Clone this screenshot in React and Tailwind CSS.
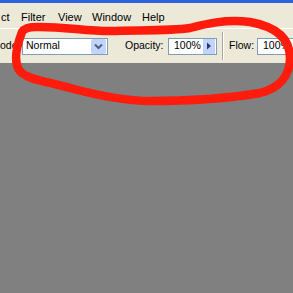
import React from 'react';

const font = { fontFamily: '"Liberation Sans", Arial, sans-serif' };

const MenuBar = () => {
    // cropped XP menu strip
    const items = [
        { label: 'ct', w: 'w-[20px]' },
        { label: 'Filter', w: 'w-[37px]' },
        { label: 'View', w: 'w-[34px]' },
        { label: 'Window', w: 'w-[50px]' },
        { label: 'Help', w: 'w-[40px]' },
    ];
    return (
        <div className="flex h-[25px] items-center pt-[3px] pl-[1px] bg-[#ece9d8] text-[11px] text-black">
            {items.map((item) => (
                <span key={item.label} className={`${item.w} shrink-0`}>
                    {item.label}
                </span>
            ))}
        </div>
    );
};

const Chevron = () => (
    <svg width="15" height="15" viewBox="0 0 15 15">
        <path d="M4 5.5 L7.5 9 L11 5.5" fill="none" stroke="#4d6185" strokeWidth="2" />
    </svg>
);

const RightArrow = () => (
    <svg width="12" height="14" viewBox="0 0 12 14">
        <polygon points="4,3.5 8,7 4,10.5" fill="#2b3a70" />
    </svg>
);

const ToolBar = () => (
    <div className="flex h-[34px] items-center bg-[#ece9d8] text-[10.5px] text-black">
        <span className="w-[22px] shrink-0">ode:</span>

        {/* blend mode combo */}
        <div className="flex h-[17px] w-[86px] shrink-0 items-center justify-between border border-[#7f9db9] bg-white">
            <span className="pl-[3px]">Normal</span>
            <div className="mr-[1px] flex h-[15px] w-[15px] items-center justify-center rounded-[2px] bg-[#c3d4fb]">
                <Chevron />
            </div>
        </div>

        <span className="ml-[17px] w-[43px] shrink-0">Opacity:</span>
        <div className="flex h-[17px] w-[49px] shrink-0 items-center justify-between border border-[#7f9db9] bg-white">
            <span className="pl-[5px]">100%</span>
            <div className="mr-[1px] flex h-[15px] w-[12px] items-center justify-center bg-[#c3d4fb]">
                <RightArrow />
            </div>
        </div>

        <div className="ml-[5px] flex h-[28px] shrink-0">
            <div className="w-[1px] bg-[#aca899]" />
            <div className="w-[1px] bg-white" />
        </div>

        <span className="ml-[5px] w-[28px] shrink-0">Flow:</span>
        <div className="flex h-[17px] w-[50px] shrink-0 items-center border border-[#7f9db9] bg-white">
            <span className="pl-[5px]">100%</span>
        </div>
    </div>
);

const Scribble = () => (
    <svg className="pointer-events-none absolute left-0 top-0" width="293" height="293" viewBox="0 0 293 293">
        <defs>
            <filter id="soft">
                <feGaussianBlur stdDeviation="0.6" />
            </filter>
        </defs>
        <path
            d="M 22 32 C 17 45 13 60 19 70 C 25 79 45 81 70 88 C 100 96 125 101 150 101 C 190 101 230 98 260 93 C 280 88 290 75 290 58 C 290 40 278 27 250 22 C 225 19 205 24 190 28 C 170 31 140 30 110 31 C 85 31 60 26 35 27 C 28 27 24 29 22 32 Z"
            fill="none"
            stroke="#ff1a0a"
            strokeWidth="8.5"
            strokeLinecap="round"
            strokeLinejoin="round"
            filter="url(#soft)"
        />
    </svg>
);

export default function App() {
    return (
        <div className="relative h-[293px] w-[293px] overflow-hidden bg-[#808080]" style={font}>
            <div className="h-[3px] bg-[#2a63dc]" />
            <MenuBar />
            <div className="h-[1px] bg-white" />
            <ToolBar />
            <Scribble />
        </div>
    );
}
